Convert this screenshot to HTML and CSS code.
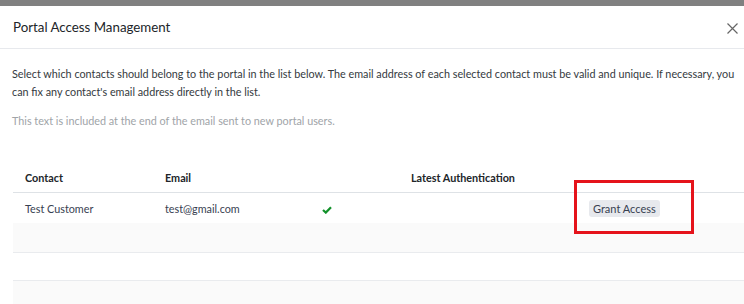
FILE: index.html
```html
<!DOCTYPE html>
<html>
<head>
    <title>Portal Access Management</title>
    <link rel="stylesheet" href="styles.css">
</head>
<body>
    <div class="modal">
        <div class="modal-header">
            <h4 class="modal-title">Portal Access Management</h4>
            <button class="btn-close" aria-label="Close">
                <svg width="11" height="11" viewBox="0 0 11 11"><path d="M0.5 0.5 L10.5 10.5 M10.5 0.5 L0.5 10.5" stroke="#666" stroke-width="1.2" fill="none"/></svg>
            </button>
        </div>
        <div class="modal-body">
            <p class="intro">Select which contacts should belong to the portal in the list below. The email address of each selected contact must be valid and unique. If necessary, you can fix any contact's email address directly in the list.</p>
            <p class="welcome">This text is included at the end of the email sent to new portal users.</p>

            <table class="user-list">
                <thead>
                    <tr>
                        <th class="col-contact">Contact</th>
                        <th class="col-email">Email</th>
                        <th class="col-check"></th>
                        <th class="col-login">Latest Authentication</th>
                        <th class="col-action"></th>
                    </tr>
                </thead>
                <tbody>
                    <tr>
                        <td>Test Customer</td>
                        <td>test@gmail.com</td>
                        <td class="check-cell">
                            <svg width="10" height="8" viewBox="0 0 10 8"><path d="M1 4 L3.8 6.6 L9 1.2" stroke="#12912a" stroke-width="2.2" fill="none"/></svg>
                        </td>
                        <td></td>
                        <td class="action-cell">
                            <span class="marked">
                                <button class="btn-grant">Grant Access</button>
                            </span>
                        </td>
                    </tr>
                    <tr class="empty"><td colspan="5"></td></tr>
                    <tr class="empty"><td colspan="5"></td></tr>
                    <tr class="empty"><td colspan="5"></td></tr>
                </tbody>
            </table>
        </div>
    </div>
</body>
</html>
```

FILE: styles.css
```css
body {
    margin: 0;
    background-color: #808080;
    font-family: 'Lato', 'Open Sans', sans-serif;
    color: #212529;
    overflow: hidden;
    height: 304px;
}

.modal {
    margin-top: 6px;
    background-color: #fff;
    height: 298px;
}

.modal-header {
    display: flex;
    align-items: center;
    justify-content: space-between;
    height: 42px;
    padding: 0 6px 0 13px;
    border-bottom: 1px solid #e7e9ed;
}

.modal-title {
    margin: 0;
    font-size: 13.3px;
    font-weight: normal;
    color: #212529;
}

.btn-close {
    border: none;
    background: none;
    padding: 0;
    width: 11px;
    height: 11px;
    margin-top: 1px;
    cursor: pointer;
}

.modal-body {
    padding: 16px 0 0 12px;
}

.intro {
    margin: 0;
    font-size: 10.8px;
    line-height: 18px;
    color: #343a40;
    padding-right: 4px;
}

.welcome {
    margin: 11px 0 0 0;
    font-size: 10.8px;
    line-height: 18px;
    color: #a0a4a8;
}

.user-list {
    margin: 33px 0 0 1px;
    border-collapse: collapse;
    width: 731px;
    table-layout: fixed;
    font-size: 10.8px;
}

.user-list th {
    text-align: left;
    font-weight: bold;
    color: #212529;
    height: 29px;
    padding: 0 12px;
    border-bottom: 1px solid #dee2e6;
}

.user-list td {
    height: 30px;
    padding: 0 12px;
    color: #374151;
}

.col-contact { width: 116px; }
.col-email { width: 133px; }
.col-check { width: 65px; }
.col-login { width: 154px; }

.check-cell svg {
    display: block;
    margin-top: 3px;
}

.user-list tbody tr:nth-child(even) td {
    background-color: #fafafa;
}

.user-list tr.empty td {
    height: 29px;
    border-bottom: 1px solid #e9ebee;
}

.user-list tr.empty:nth-child(3) td {
    height: 27px;
}

.action-cell {
    position: relative;
}

.btn-grant {
    border: none;
    border-radius: 3px;
    background-color: #e7e9ed;
    color: #374151;
    font-family: 'Lato', 'Open Sans', sans-serif;
    font-size: 11px;
    padding: 2px 4px;
    margin-top: 1px;
}

/* red annotation box */
.marked::after {
    content: "";
    position: absolute;
    left: -3px;
    top: -13px;
    width: 114px;
    height: 48px;
    border: 3px solid #e5131b;
}
```
